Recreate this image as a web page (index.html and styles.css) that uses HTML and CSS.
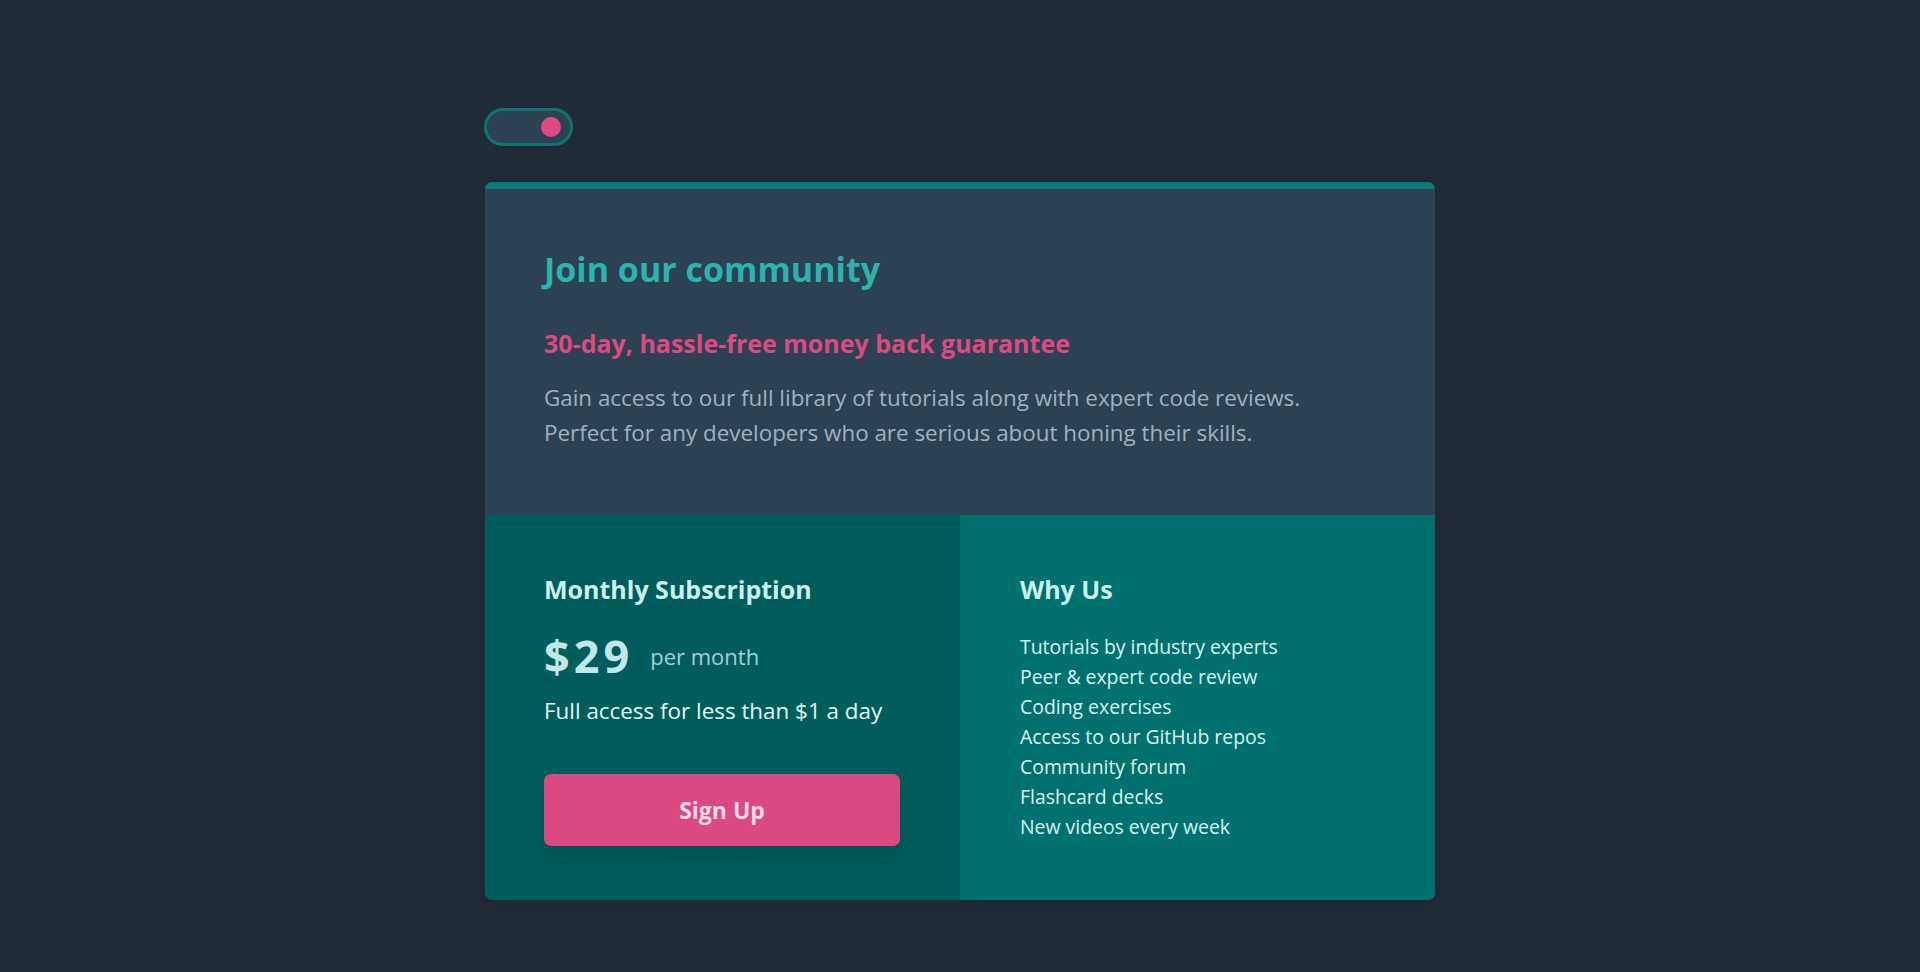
FILE: index.html
```
<!DOCTYPE html>
<html lang="en">
<head>
<meta charset="utf-8">
<title>Join our community</title>
<link rel="stylesheet" href="styles.css">
</head>
<body>
<main class="page">
  <button class="toggle" aria-label="Toggle theme"><span class="knob"></span></button>
  <section class="card">
    <div class="intro">
      <h1 class="title">Join our community</h1>
      <h2 class="guarantee">30-day, hassle-free money back guarantee</h2>
      <p class="desc">Gain access to our full library of tutorials along with expert code reviews.<br>Perfect for any developers who are serious about honing their skills.</p>
    </div>
    <div class="bottom">
      <div class="col subscription">
        <h3 class="col-title">Monthly Subscription</h3>
        <div class="price-row"><span class="price">$29</span><span class="per">per month</span></div>
        <p class="access">Full access for less than $1 a day</p>
        <button class="signup">Sign Up</button>
      </div>
      <div class="col why">
        <h3 class="col-title">Why Us</h3>
        <ul class="list">
          <li>Tutorials by industry experts</li>
          <li>Peer &amp; expert code review</li>
          <li>Coding exercises</li>
          <li>Access to our GitHub repos</li>
          <li>Community forum</li>
          <li>Flashcard decks</li>
          <li>New videos every week</li>
        </ul>
      </div>
    </div>
  </section>
</main>
</body>
</html>
```
FILE: styles.css
```
* { box-sizing: border-box; }
html, body { margin: 0; padding: 0; }
body {
  background: #202b37;
  font-family: "Open Sans", sans-serif;
  min-height: 972px;
}
.page {
  width: 950px;
  margin: 0 auto;
  padding-top: 108px;
}
.toggle {
  display: flex;
  align-items: center;
  justify-content: flex-end;
  width: 89px;
  height: 38px;
  margin-left: -1px;
  padding: 0 9px 0 0;
  border: 3px solid #0b766f;
  border-radius: 19px;
  background: #2c4151;
  cursor: pointer;
}
.knob {
  width: 20px;
  height: 20px;
  border-radius: 50%;
  background: #df4a84;
}
.card {
  margin-top: 36px;
  border-radius: 7px;
  overflow: hidden;
  border-top: 7px solid #0a7a74;
  box-shadow: 0 10px 30px rgba(0, 0, 0, 0.08);
}
.intro {
  background: #2c4252;
  padding: 60px 60px 65px 59px;
}
.title {
  margin: 0;
  font-size: 34px;
  line-height: 40px;
  font-weight: 700;
  color: #2bb3ae;
}
.guarantee {
  margin: 39px 0 0;
  font-size: 25px;
  line-height: 30px;
  font-weight: 700;
  color: #dd4a82;
}
.desc {
  margin: 22px 0 0;
  font-size: 22.4px;
  line-height: 35px;
  color: #a0b1c1;
}
.bottom {
  display: grid;
  grid-template-columns: 1fr 1fr;
}
.col {
  padding: 59px 60px 54px 59px;
}
.subscription { background: #005d5b; }
.why { background: #00716d; padding-left: 60px; }
.col-title {
  margin: 0;
  font-size: 25px;
  line-height: 30px;
  font-weight: 700;
  color: #cdf1f1;
}
.price-row {
  display: flex;
  align-items: center;
  gap: 17px;
  margin-top: 26px;
  height: 52px;
}
.price {
  font-size: 45px;
  line-height: 52px;
  font-weight: 700;
  letter-spacing: 4px;
  color: #c3e6ea;
}
.per {
  font-size: 22px;
  line-height: 30px;
  color: #9cd3d3;
}
.access {
  margin: 14px 0 0;
  font-size: 22.4px;
  line-height: 30px;
  color: #e3f6f6;
}
.signup {
  display: block;
  width: 356px;
  height: 72px;
  margin-top: 48px;
  border: 0;
  border-radius: 7px;
  background: #dc4881;
  color: #f6dce7;
  font-family: "Open Sans", sans-serif;
  font-size: 23px;
  font-weight: 700;
  box-shadow: 0 14px 18px rgba(0, 0, 0, 0.12);
  cursor: pointer;
}
.list {
  list-style: none;
  margin: 28px 0 0;
  padding: 0;
}
.list li {
  font-size: 19.4px;
  line-height: 30px;
  color: #d9f3f3;
}
```
